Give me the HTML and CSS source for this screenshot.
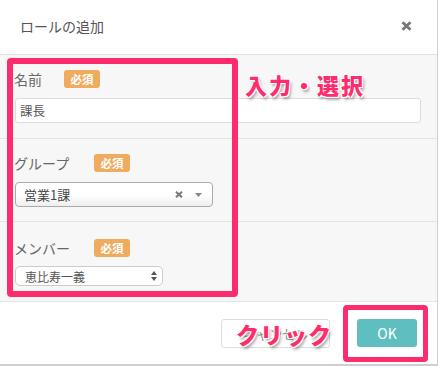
FILE: index.html
```html
<!DOCTYPE html>
<html lang="ja">
<head>
<meta charset="utf-8">
<link rel="stylesheet" href="styles.css">
</head>
<body>
<div class="modal">
  <div class="header">
    <h1 class="title">ロールの追加</h1>
    <svg class="close" width="11" height="10" viewBox="0 0 11 10"><path d="M1.5 1.2 L9.5 8.8 M9.5 1.2 L1.5 8.8" stroke="#777" stroke-width="2.8" stroke-linecap="butt"/></svg>
  </div>
  <div class="body">
    <div class="section s1">
      <div class="label-row"><span class="label">名前</span><span class="badge">必須</span></div>
      <div class="input">課長</div>
    </div>
    <div class="section s2">
      <div class="label-row"><span class="label">グループ</span><span class="badge">必須</span></div>
      <div class="select2">
        <span class="s2-text">営業1課</span>
        <svg class="s2-clear" width="8" height="7" viewBox="0 0 8 7"><path d="M1 0.8 L7 6.2 M7 0.8 L1 6.2" stroke="#777" stroke-width="2"/></svg>
        <svg class="s2-arrow" width="7" height="4" viewBox="0 0 7 4"><path d="M0 0 H7 L3.5 4 Z" fill="#888"/></svg>
      </div>
    </div>
    <div class="section s3">
      <div class="label-row"><span class="label">メンバー</span><span class="badge">必須</span></div>
      <div class="native-select">
        <span class="ns-text">恵比寿一義</span>
        <svg class="ns-arrows" width="6" height="10" viewBox="0 0 6 10"><path d="M3 0 L6 4 H0 Z M0 6 H6 L3 10 Z" fill="#555"/></svg>
      </div>
    </div>
  </div>
  <div class="footer">
    <div class="btn btn-cancel">キャンセル</div>
    <div class="btn btn-ok">OK</div>
  </div>

  <div class="hl hl-form"></div>
  <div class="hl hl-ok"></div>
  <div class="note note-input">入力・選択</div>
  <div class="note note-click">クリック</div>
</div>
</body>
</html>
```
FILE: styles.css
```css
* { box-sizing: border-box; }
html, body { margin: 0; padding: 0; background: #fff; }
body {
  font-family: "Noto Sans CJK JP", "Noto Sans", sans-serif;
  width: 438px;
  height: 366px;
  overflow: hidden;
}
.modal {
  position: relative;
  width: 438px;
  height: 366px;
  border-right: 1px solid #cfcfcf;
  border-bottom: 2px solid #cfcfcf;
  display: flex;
  flex-direction: column;
  background: #fff;
}
.header {
  height: 55px;
  border-bottom: 1px solid #e2e2e2;
  display: flex;
  align-items: center;
  justify-content: space-between;
  padding: 0 25px 2px 20px;
}
.title {
  margin: 0;
  font-size: 14px;
  font-weight: normal;
  color: #555;
}
.close { display: block; }
.body { background: #f7f7f7; }
.section {
  border-bottom: 1px solid #e3e3e3;
  padding: 15px 16px 15px 15px;
  display: flex;
  flex-direction: column;
  align-items: flex-start;
  gap: 10px;
}
.s2 { padding-bottom: 14px; }
.s3 { padding-top: 17px; gap: 9px; padding-bottom: 15px; }
.label-row {
  display: flex;
  align-items: center;
  height: 18px;
}
.label {
  font-size: 14px;
  color: #666;
  margin-left: -1px;
  width: 50px;
}
.s2 .label, .s3 .label { width: 80px; }
.badge {
  display: inline-flex;
  align-items: center;
  justify-content: center;
  width: 36px;
  height: 18px;
  border-radius: 3px;
  background: #efab5e;
  color: #fff;
  font-size: 11.5px;
  font-weight: bold;
}
.input {
  width: 406px;
  height: 25px;
  border: 1px solid #ddd;
  border-radius: 3px;
  background: #fff;
  font-size: 12.5px;
  color: #555;
  padding-left: 4px;
  display: flex;
  align-items: center;
}
.select2 {
  width: 198px;
  height: 25px;
  border: 1px solid #aaa;
  border-radius: 4px;
  background: linear-gradient(#fff 0%, #fff 50%, #eee 100%);
  display: flex;
  align-items: center;
  padding-left: 8px;
  padding-right: 10px;
}
.s2-text { font-size: 13px; color: #444; flex: 1; }
.s2-clear { margin-right: 12px; }
.native-select {
  width: 148px;
  height: 20px;
  border: 1px solid #ccc;
  border-radius: 5px;
  background: #fff;
  display: flex;
  align-items: center;
  padding-left: 9px;
  padding-right: 5px;
}
.ns-text { font-size: 12px; color: #555; flex: 1; }
.footer {
  flex: 1;
  background: #fff;
  display: flex;
  justify-content: flex-end;
  align-items: center;
  gap: 27px;
  padding: 0 20px 0 0;
}
.btn {
  height: 29px;
  border-radius: 3px;
  display: flex;
  align-items: center;
  justify-content: center;
  font-size: 13px;
}
.btn-cancel {
  width: 109px;
  border: 1px solid #ddd;
  color: #888;
  background: #fff;
}
.btn-ok {
  width: 60px;
  height: 28px;
  background: #5fbfc0;
  color: #fff;
  font-size: 14px;
}
.hl {
  position: absolute;
  border: 6px solid #fe2c6c;
  border-radius: 4px;
}
.hl-form { left: 7px; top: 58px; width: 231px; height: 239px; }
.hl-ok { left: 343px; top: 305px; width: 85px; height: 57px; border-width: 5px; }
.note {
  position: absolute;
  color: #fe2c6c;
  font-weight: 900;
  white-space: nowrap;
  text-shadow: -1px -1px 0 #fff, 1px -1px 0 #fff, -1px 1px 0 #fff, 1px 1px 0 #fff, 2px 3px 3px rgba(0,0,0,0.35);
}
.note-input { left: 245px; top: 69px; font-size: 22px; letter-spacing: 2px; line-height: 30px; }
.note-click { left: 236px; top: 318px; font-size: 23px; letter-spacing: 1px; line-height: 32px; }
```
